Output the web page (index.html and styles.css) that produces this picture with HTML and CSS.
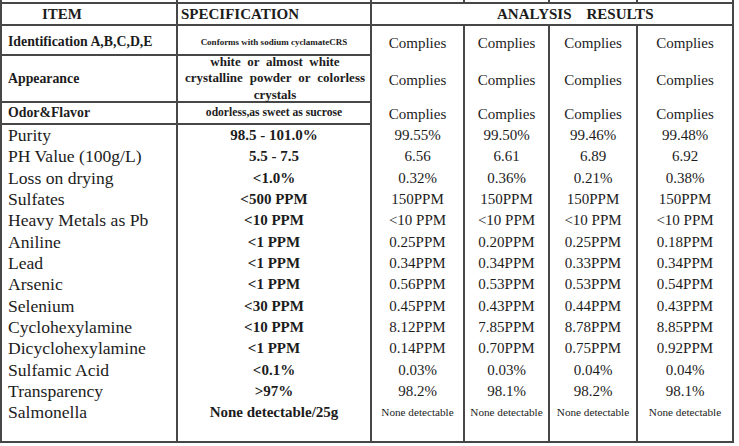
FILE: index.html
```html
<!DOCTYPE html>
<html>
<head>
<meta charset="utf-8">
<title>Analysis Results</title>
<link rel="stylesheet" href="styles.css">
</head>
<body>
<div class="sheet">
  <div class="row stub">
    <div class="c"></div><div class="c"></div><div class="c"></div><div class="c"></div><div class="c"></div><div class="c"></div>
  </div>
  <div class="row head">
    <div class="c item-h">ITEM</div>
    <div class="c spec-h">SPECIFICATION</div>
    <div class="c res-h">ANALYSIS<span class="gap"></span>RESULTS</div>
  </div>
  <div class="row sec idn">
    <div class="c lab">Identification A,B,C,D,E</div>
    <div class="c sp tiny">Conforms with sodium cyclamateCRS</div>
    <div class="c r">Complies</div><div class="c r">Complies</div><div class="c r">Complies</div><div class="c r">Complies</div>
  </div>
  <div class="row sec app">
    <div class="c lab">Appearance</div>
    <div class="c sp multi">
      <div class="l1">white&nbsp; or&nbsp; almost&nbsp; white</div>
      <div class="l2">crystalline powder or colorless</div>
      <div class="l3">crystals</div>
    </div>
    <div class="c r">Complies</div><div class="c r">Complies</div><div class="c r">Complies</div><div class="c r">Complies</div>
  </div>
  <div class="row sec odr">
    <div class="c lab">Odor&amp;Flavor</div>
    <div class="c sp small">odorless,as sweet as sucrose</div>
    <div class="c r">Complies</div><div class="c r">Complies</div><div class="c r">Complies</div><div class="c r">Complies</div>
  </div>

  <div class="row d"><div class="c nm">Purity</div><div class="c sv">98.5 - 101.0%</div><div class="c r">99.55%</div><div class="c r">99.50%</div><div class="c r">99.46%</div><div class="c r">99.48%</div></div>
  <div class="row d"><div class="c nm">PH Value (100g/L)</div><div class="c sv">5.5 - 7.5</div><div class="c r">6.56</div><div class="c r">6.61</div><div class="c r">6.89</div><div class="c r">6.92</div></div>
  <div class="row d"><div class="c nm">Loss on drying</div><div class="c sv">&lt;1.0%</div><div class="c r">0.32%</div><div class="c r">0.36%</div><div class="c r">0.21%</div><div class="c r">0.38%</div></div>
  <div class="row d"><div class="c nm">Sulfates</div><div class="c sv">&lt;500 PPM</div><div class="c r">150PPM</div><div class="c r">150PPM</div><div class="c r">150PPM</div><div class="c r">150PPM</div></div>
  <div class="row d"><div class="c nm">Heavy Metals as Pb</div><div class="c sv">&lt;10 PPM</div><div class="c r">&lt;10 PPM</div><div class="c r">&lt;10 PPM</div><div class="c r">&lt;10 PPM</div><div class="c r">&lt;10 PPM</div></div>
  <div class="row d"><div class="c nm">Aniline</div><div class="c sv">&lt;1 PPM</div><div class="c r">0.25PPM</div><div class="c r">0.20PPM</div><div class="c r">0.25PPM</div><div class="c r">0.18PPM</div></div>
  <div class="row d"><div class="c nm">Lead</div><div class="c sv">&lt;1 PPM</div><div class="c r">0.34PPM</div><div class="c r">0.34PPM</div><div class="c r">0.33PPM</div><div class="c r">0.34PPM</div></div>
  <div class="row d"><div class="c nm">Arsenic</div><div class="c sv">&lt;1 PPM</div><div class="c r">0.56PPM</div><div class="c r">0.53PPM</div><div class="c r">0.53PPM</div><div class="c r">0.54PPM</div></div>
  <div class="row d"><div class="c nm">Selenium</div><div class="c sv">&lt;30 PPM</div><div class="c r">0.45PPM</div><div class="c r">0.43PPM</div><div class="c r">0.44PPM</div><div class="c r">0.43PPM</div></div>
  <div class="row d"><div class="c nm">Cyclohexylamine</div><div class="c sv">&lt;10 PPM</div><div class="c r">8.12PPM</div><div class="c r">7.85PPM</div><div class="c r">8.78PPM</div><div class="c r">8.85PPM</div></div>
  <div class="row d"><div class="c nm">Dicyclohexylamine</div><div class="c sv">&lt;1 PPM</div><div class="c r">0.14PPM</div><div class="c r">0.70PPM</div><div class="c r">0.75PPM</div><div class="c r">0.92PPM</div></div>
  <div class="row d"><div class="c nm">Sulfamic Acid</div><div class="c sv">&lt;0.1%</div><div class="c r">0.03%</div><div class="c r">0.03%</div><div class="c r">0.04%</div><div class="c r">0.04%</div></div>
  <div class="row d"><div class="c nm">Transparency</div><div class="c sv">&gt;97%</div><div class="c r">98.2%</div><div class="c r">98.1%</div><div class="c r">98.2%</div><div class="c r">98.1%</div></div>
  <div class="row d last"><div class="c nm">Salmonella</div><div class="c sv">None detectable/25g</div><div class="c r nd">None detectable</div><div class="c r nd">None detectable</div><div class="c r nd">None detectable</div><div class="c r nd">None detectable</div></div>
</div>
</body>
</html>
```

FILE: styles.css
```css
html, body {
  margin: 0;
  padding: 0;
  background: #ffffff;
}

body {
  font-family: "Liberation Serif", "Times New Roman", serif;
  color: #1c1c1c;
}

.sheet {
  display: grid;
  grid-template-columns: 176px 194px 93px 85px 88px 98px;
  width: 734px;
}

.row {
  display: contents;
}

.c {
  box-sizing: border-box;
  border-left: 2px solid #474747;
  white-space: nowrap;
}

.c:last-child {
  border-right: 2px solid #474747;
}

/* partial row cut at the top */
.stub .c {
  height: 4px;
  border-bottom: 2px solid #474747;
}

/* header */
.head .c {
  height: 22px;
  line-height: 20px;
  font-size: 15px;
  font-weight: bold;
  border-bottom: 2px solid #474747;
}

.item-h {
  padding-left: 40px;
}

.spec-h {
  padding-left: 3px;
}

.res-h {
  grid-column: span 4;
  padding-left: 125px;
}

.gap {
  display: inline-block;
  width: 15px;
}

/* section rows (identification, appearance, odor) */
.sec .c {
  display: flex;
  align-items: center;
  line-height: 16px;
}

.sec .lab,
.sec .sp {
  border-bottom: 2px solid #474747;
}

.lab {
  padding-left: 6px;
  font-size: 13.8px;
  font-weight: bold;
}

.sp {
  justify-content: center;
  font-weight: bold;
  font-size: 11.6px;
}

.sec .tiny {
  font-size: 9px;
  padding-top: 5px;
}

.r {
  justify-content: center;
  text-align: center;
  font-size: 15px;
}

.idn .c {
  height: 30px;
  padding-top: 3px;
}

.app .c {
  height: 47px;
}

.odr .c {
  height: 22px;
}

.sec .multi {
  flex-direction: column;
  align-items: stretch;
  justify-content: center;
  padding: 0 5px 0 7px;
  font-size: 13px;
  line-height: 16.5px;
}

.multi .l1 {
  text-align: center;
}

.multi .l2 {
  text-align: justify;
  text-align-last: justify;
}

.multi .l3 {
  text-align: center;
}

/* data rows */
.d .c {
  height: 21.35px;
  line-height: 21.35px;
}

.d .nm {
  padding-left: 6px;
  font-size: 17.6px;
}

.d .sv {
  text-align: center;
  font-size: 15px;
  font-weight: bold;
}

.d .r {
  display: block;
  text-align: center;
  font-size: 15px;
}

.d .nd {
  font-size: 11.2px;
}

.d.last .c {
  height: 40.5px;
  border-bottom: 2px solid #474747;
}
```
